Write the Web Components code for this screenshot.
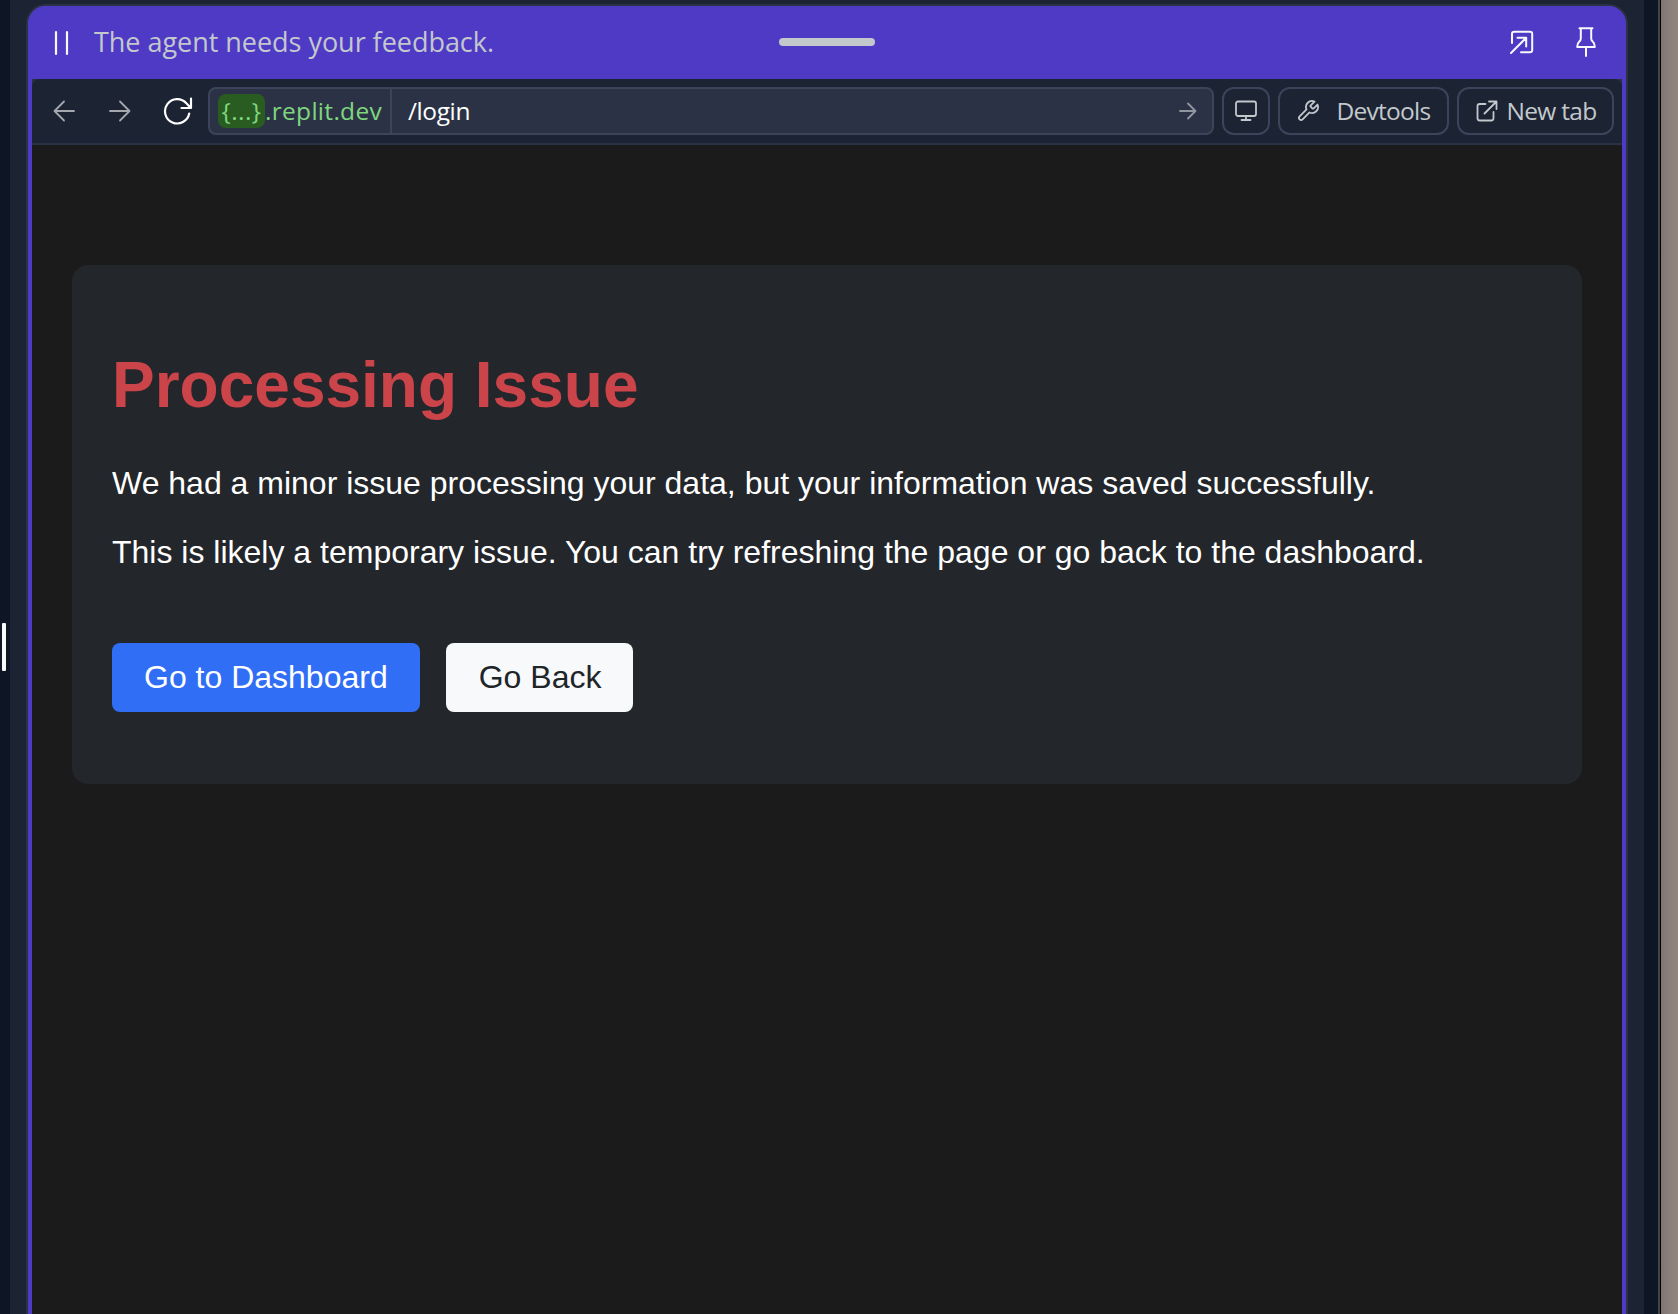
<!DOCTYPE html>
<html lang="en">
<head>
<meta charset="utf-8">
<title>Preview</title>
<style>
html,body{margin:0;height:100%;overflow:hidden;background:#0e1525}
</style>
</head>
<body>
<app-desk>
  <preview-window>
    <agent-banner slot="banner"></agent-banner>
    <browser-bar slot="bar"></browser-bar>
    <issue-card heading="Processing Issue">
      <p>We had a minor issue processing your data, but your information was saved successfully.</p>
      <p>This is likely a temporary issue. You can try refreshing the page or go back to the dashboard.</p>
      <action-button slot="actions" kind="primary">Go to Dashboard</action-button>
      <action-button slot="actions" kind="light">Go Back</action-button>
    </issue-card>
  </preview-window>
</app-desk>
<script>
const define = (name, html, after) => customElements.define(name, class extends HTMLElement {
  connectedCallback() {
    if (this.shadowRoot) return;
    this.attachShadow({mode: 'open'}).innerHTML = html;
    if (after) after(this, this.shadowRoot);
  }
});

const icons = {
  back: [22, 22, '<path d="M21 11H2M11 1.5L1.5 11L11 20.5"/>'],
  forward: [22, 22, '<path d="M1 11H20M11 1.5L20.5 11L11 20.5"/>'],
  go: [18, 18, '<path d="M1 9H16M9 1.5L16.5 9L9 16.5"/>'],
  reload: [30, 28, '<path d="M26.2 16.5A12.2 12.2 0 1 1 23.4 6.2L27.8 10.9M28 1.5V11H18.5"/>'],
  monitor: [22, 22, '<rect x="1" y="1.5" width="20" height="14.5" rx="2"/><path d="M11 16V20M6.5 20H15.5"/>'],
  wrench: [24, 24, '<path d="M14.7 6.3a1 1 0 0 0 0 1.4l1.6 1.6a1 1 0 0 0 1.4 0l3.77-3.77a6 6 0 0 1-7.94 7.94l-6.91 6.91a2.12 2.12 0 0 1-3-3l6.91-6.91a6 6 0 0 1 7.94-7.94l-3.76 3.76z"/>'],
  external: [22, 22, '<path d="M9.5 4H3.7Q1.5 4 1.5 6.2V18.3Q1.5 20.5 3.7 20.5H15.3Q17.5 20.5 17.5 18.3V12M8.5 13.5L20.5 1.5M13 1.5H20.5V9"/>'],
  popout: [24, 24, '<path d="M2 13V4Q2 1.8 4.2 1.8H20Q22.2 1.8 22.2 4V20Q22.2 22.2 20 22.2H11M1 23L16.2 7.8M7.5 7.8H16.2V16.5"/>'],
  pin: [20, 30, '<path d="M3.5 1.2H16.5M4.8 1.2V11.5Q4.8 13.4 3.3 14.5Q1.2 16.2 1.2 20H18.8Q18.8 16.2 16.7 14.5Q15.2 13.4 15.2 11.5V1.2M10 20V29"/>'],
  pause: [16, 26, '<path d="M3 2V24M14 2V24"/>']
};
define('ui-icon', '<style>:host{display:block;flex:none}svg{display:block;fill:none;stroke:currentColor;stroke-width:var(--stroke,1.8);stroke-linecap:round;stroke-linejoin:round}</style>', (el, root) => {
  const [w, h, body] = icons[el.getAttribute('name')];
  const size = +(el.getAttribute('width') || w);
  root.innerHTML += `<svg width="${size}" height="${h * size / w}" viewBox="0 0 ${w} ${h}">${body}</svg>`;
});

// Single-line label whose tracking spreads the text over the "measure" width.
define('ui-label', '<style>:host{display:block;flex:none;white-space:nowrap}span{display:inline-block}</style><span><slot></slot></span>', (el, root) => {
  const want = +el.getAttribute('measure');
  const span = root.querySelector('span');
  const n = el.textContent.length;
  span.style.letterSpacing = (want - span.getBoundingClientRect().width) / n + 'px';
});

define('tool-button', `<style>
:host{display:flex;box-sizing:border-box;height:48px;border:2px solid #3c445c;border-radius:12px;align-items:center;justify-content:center;color:#c2c8cc;flex:none}
</style><slot></slot>`);

define('agent-banner', `<style>
:host{display:grid;grid-template-columns:1fr 96px 1fr;align-items:center;height:73px;box-sizing:border-box;padding:0 26px 0 26px;background:#4f3ac5;color:#c2c8cc;font:500 27px/32px "Open Sans",sans-serif}
.left,.right{display:flex;align-items:center}
.left{gap:25px;margin-left:-1px}.left ui-icon{color:#f5f9fc;--stroke:2.2}
.left ui-label{padding-bottom:1px}
.right{justify-content:flex-end;gap:42px;padding:0 4px 1px 0;color:#f5f9fc;--stroke:2}
.right ui-icon:last-child{margin-bottom:1px}
.handle{height:8px;border-radius:4px;background:#c2c8cc;margin-bottom:1px}
</style>
<div class="left"><ui-icon name="pause"></ui-icon><ui-label measure="400">The agent needs your feedback.</ui-label></div>
<div class="handle"></div>
<div class="right"><ui-icon name="popout"></ui-icon><ui-icon name="pin"></ui-icon></div>`);

define('browser-bar', `<style>
:host{display:flex;gap:8px;align-items:center;box-sizing:border-box;height:66px;padding:0 8px 0 21px;background:#1c2333;border-bottom:2px solid #2b3245;border-radius:8px 8px 0 0;font:500 24.5px/30px "Open Sans",sans-serif}
.nav{display:flex;align-items:center;color:#a4a7ae;width:147px;gap:34px;flex:none}
.nav ui-icon:last-child{color:#fff;--stroke:2.2;margin-left:-2px}
.url{flex:1;display:flex;box-sizing:border-box;height:48px;border:2px solid #3c445c;border-radius:8px;background:#2b3245;align-items:center}
.host{display:flex;align-items:center;align-self:stretch;box-sizing:border-box;width:182px;padding-left:8px;border-right:2px solid #3c445c;color:#7fd67f}
.chip{display:flex;justify-content:center;width:47px;height:34px;border-radius:8px;background:#295c20;line-height:34px}
.path{color:#fff;flex:1;padding-left:16px}
.url>ui-icon{color:#9296a0;margin-right:15px}
.m{width:48px}.d{width:171px;gap:17px;padding-right:1px}.n{width:157px;gap:9px;padding-left:1px}
</style>
<div class="nav"><ui-icon name="back"></ui-icon><ui-icon name="forward"></ui-icon><ui-icon name="reload"></ui-icon></div>
<div class="url">
  <div class="host"><div class="chip"><ui-label measure="40">{...}</ui-label></div><ui-label measure="117">.replit.dev</ui-label></div>
  <div class="path"><ui-label measure="62">/login</ui-label></div>
  <ui-icon name="go"></ui-icon>
</div>
<tool-button class="m"><ui-icon name="monitor"></ui-icon></tool-button>
<tool-button class="d"><ui-icon name="wrench"></ui-icon><ui-label measure="94">Devtools</ui-label></tool-button>
<tool-button class="n"><ui-icon name="external"></ui-icon><ui-label measure="90">New tab</ui-label></tool-button>`);

define('action-button', `<style>
:host{display:block;padding:16px 32px;border-radius:8px;line-height:37px;color:#fff;background:#316ef6}
:host([kind=light]){padding:16px 32px 16px 33px;background:#f8f9fa;color:#212529}
</style><slot></slot>`);

define('issue-card', `<style>
:host{display:block;box-sizing:border-box;height:519px;padding:40px;border-radius:16px;background:#23262a;color:#fff;font:32px/37px "Liberation Sans",Arial,sans-serif}
h1{margin:44px 0 43px;font-size:64px;line-height:73px;color:#cb444a}
::slotted(p){margin:0 0 32px!important}
.actions{display:flex;gap:26px;margin-top:72px}
.text{display:block;height:106px}
</style><h1></h1><div class="text"><slot></slot></div><div class="actions"><slot name="actions"></slot></div>`, (el, root) => {
  root.querySelector('h1').textContent = el.getAttribute('heading');
});

define('preview-window', `<style>
:host{display:block;box-sizing:border-box;height:1310px;border:2px solid #2b3245;border-bottom:0;border-radius:20px 20px 0 0;background:#2b3245}
.frame{height:100%;display:flex;flex-direction:column;border-radius:18px 18px 0 0;background:#4f3ac5;overflow:hidden}
.body{display:flex;flex-direction:column;flex:1;margin:0 4px;background:#1b1b1b}
.bar{background:#2b3245}
main{padding:120px 40px}
</style><div class="frame"><slot name="banner"></slot><div class="body"><div class="bar"><slot name="bar"></slot></div><main><slot></slot></main></div></div>`);

define('app-desk', `<style>
:host{display:flex;height:1314px;background:#0e1525}
.gutter{width:10px;display:flex;align-items:center;box-sizing:border-box;padding:0 0 20px 2px}
.grip{width:4px;height:48px;border-radius:1px;background:#f5f9fc}
.pane{width:1634px;box-sizing:border-box;padding:4px 16px 0;background:#1c2333}
.edge{box-sizing:border-box;width:17px;border-right:1px solid #000;background:linear-gradient(90deg,#0e1525 14px,#42444d 14px)}
.wall{flex:1;background:linear-gradient(90deg,#7f7472,#8a7f7b 50%,#93857f)}
</style>
<div class="gutter"><div class="grip"></div></div>
<div class="pane"><slot></slot></div>
<div class="edge"></div><div class="wall"></div>`);
</script>
</body>
</html>
